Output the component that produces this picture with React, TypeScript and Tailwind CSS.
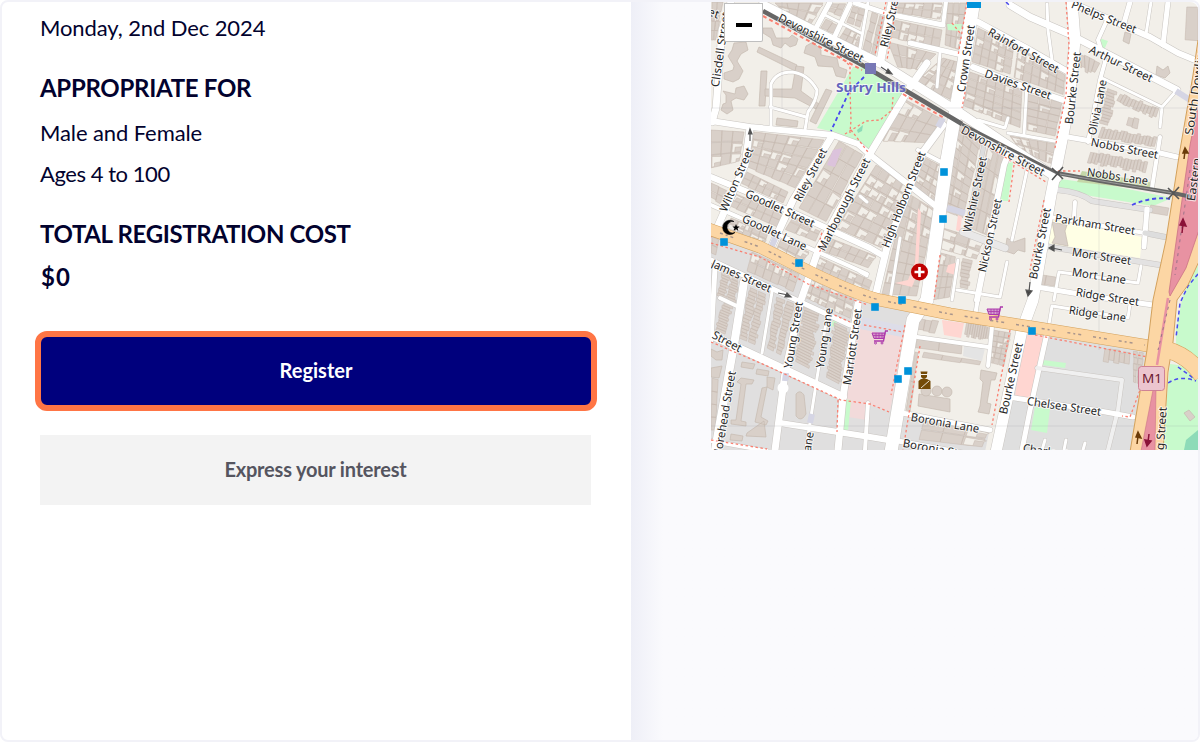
type Road = { d: string; w: number; c?: string };
type BlockProps = { q: number[]; c: number; r: number };
type LabelProps = { t: string; p: [number, number, number, number]; s?: number };

// Street network, drawn as a casing and a fill
const roads: Road[] = [
  { d: "M711 121 L750 127 L833 135 L858 144 L873 157 L937 207", w: 6 },
  { d: "M731 2 L722 30 L716 108 L712 122", w: 7 },
  { d: "M771 127 V84 Q776 72 792 72 Q808 74 817 90 Q817 100 808 112 L805 130", w: 3 },
  { d: "M770 107 L806 117", w: 3 },
  { d: "M892 2 L880 63", w: 8 },
  { d: "M830 2 L815 30", w: 5 },
  { d: "M850 4 L834 38", w: 5 },
  { d: "M823 14 L861 33", w: 3 },
  { d: "M868 2 L860 48", w: 3 },
  { d: "M855 3 L888 14 L943 25", w: 5 },
  { d: "M946 2 L943 25", w: 4 },
  { d: "M910 43 L962 55", w: 5 },
  { d: "M940 53 L937 87", w: 3 },
  { d: "M927 63 L910 87 L868 157 L819 248 L801 300 L785 373 L775 450", w: 7 },
  { d: "M978 22 L1030 50 L1070 73", w: 6 },
  { d: "M973 67 L1030 89 L1066 101", w: 6 },
  { d: "M943 125 L923 152 L887 247 L874 302", w: 7 },
  { d: "M1010 5 L1030 17 L1067 33 L1177 90", w: 7 },
  { d: "M1077 5 L1150 37 L1178 53 L1195 60", w: 6 },
  { d: "M1047 4 L1048 30 L1053 67", w: 3 },
  { d: "M1130 2 L1124 23", w: 5 },
  { d: "M1151 2 L1146 34", w: 3 },
  { d: "M1168 2 L1163 45", w: 5 },
  { d: "M1107 20 L1098 40 L1105 62 L1100 80 L1088 142", w: 4 },
  { d: "M1102 78 L1162 107 L1177 90 M1162 107 L1160 127", w: 3 },
  { d: "M1068 137 L1160 153 L1177 157", w: 5 },
  { d: "M1160 137 L1152 188", w: 4 },
  { d: "M1027 84 L1024 135 M978 120 L1005 128 L1008 118 M1008 133 L1060 142", w: 3 },
  { d: "M750 128 L745 165 L717 228", w: 7 },
  { d: "M832 136 L793 200 L771 248", w: 7 },
  { d: "M711 177 L750 193 L870 248 L882 255", w: 6 },
  { d: "M711 205 L807 247 L867 274", w: 4 },
  { d: "M711 260 L790 297 L850 325", w: 5 },
  { d: "M744 282 L734 345 L715 450", w: 8 },
  { d: "M772 292 L762 353", w: 3 },
  { d: "M715 268 L711 340", w: 5 },
  { d: "M720 298 L741 308", w: 4 },
  { d: "M711 335 L843 397", w: 8 },
  { d: "M858 304 L843 397 L838 450", w: 7 },
  { d: "M828 310 L817 378 L810 423 L806 450", w: 3 },
  { d: "M780 423 L870 437 L894 441", w: 6 },
  { d: "M868 403 L865 450", w: 4 },
  { d: "M711 441 L767 451", w: 4 },
  { d: "M902 413 L990 430", w: 5 },
  { d: "M898 441 L990 458", w: 5 },
  { d: "M917 337 L988 347 M992 327 L988 366", w: 4 },
  { d: "M978 298 L975 316", w: 4 },
  { d: "M1007 262 L1000 297 L957 290 M958 260 L952 300", w: 3 },
  { d: "M1010 150 L1004 165 L977 300", w: 6 },
  { d: "M985 140 L967 228", w: 4, c: "#ddd" },
  { d: "M1027 170 L1012 240", w: 3 },
  { d: "M963 232 L1005 248", w: 7, c: "#e9e8e8" },
  { d: "M900 238 L890 300", w: 3 },
  { d: "M860 196 L867 202 M860 272 L867 276", w: 3 },
  { d: "M918 150 L943 163", w: 4 },
  { d: "M1058 190 Q1080 192 1092 201 L1150 210", w: 5, c: "#e3e2e2" },
  { d: "M1050 217 L1145 233 M1075 202 L1074 217", w: 4 },
  { d: "M1147 209 L1144 247", w: 5 },
  { d: "M1145 233 L1165 237", w: 5, c: "#ddd" },
  { d: "M1044 246 L1160 265", w: 5, c: "#e3e2e2" },
  { d: "M1054 300 L1059 272 L1138 283 L1141 266", w: 3 },
  { d: "M1037 287 L1097 297 L1153 305", w: 5 },
  { d: "M1049 324 L1052 306 L1128 318 L1130 304", w: 3 },
  { d: "M1047 333 L1030 410 L1022 450", w: 5 },
  { d: "M1037 368 L1122 380 L1118 410 L1108 450", w: 4, c: "#f0f0f0" },
  { d: "M1008 397 L1100 411 L1133 417", w: 5 },
  { d: "M1045 440 L1042 450 M1066 440 L1064 450 M1085 443 L1083 450", w: 3 },
  { d: "M763 5 L865 56 L882 64 L960 113 L1000 140 L1057 178", w: 9 },
  { d: "M1072 0 L1075 40 L1069 105 L1060 150 L1051 195 L1033 300 L1022 330 L996 452", w: 11 },
  { d: "M974 0 L961 80 L947 160 L927 300 L913 320 L891 452", w: 13 },
];

// Quads of building plots: four corners, then columns and rows
const blocks: BlockProps[] = [
  { q: [711, 2, 724, 2, 716, 40, 711, 40], c: 2, r: 4 },
  { q: [775, 3, 823, 3, 811, 24, 782, 10], c: 4, r: 2 },
  { q: [826, 19, 840, 25, 833, 34, 820, 29], c: 2, r: 1 },
  { q: [833, 3, 846, 3, 840, 17, 827, 12], c: 2, r: 2 },
  { q: [846, 28, 862, 35, 858, 47, 839, 39], c: 3, r: 2 },
  { q: [852, 6, 866, 10, 862, 28, 846, 22], c: 2, r: 3 },
  { q: [872, 12, 886, 18, 877, 57, 863, 49], c: 2, r: 4 },
  { q: [896, 3, 942, 3, 940, 20, 893, 12], c: 5, r: 2 },
  { q: [894, 20, 942, 30, 939, 48, 890, 38], c: 6, r: 2 },
  { q: [948, 3, 966, 3, 960, 50, 945, 45], c: 3, r: 4 },
  { q: [888, 42, 936, 54, 920, 70, 898, 68], c: 5, r: 2 },
  { q: [943, 58, 958, 62, 950, 100, 915, 82], c: 4, r: 4 },
  { q: [904, 99, 942, 119, 925, 143, 882, 142], c: 4, r: 3 },
  { q: [978, 28, 1014, 45, 1010, 75, 972, 62], c: 5, r: 4 },
  { q: [1018, 48, 1065, 75, 1063, 95, 1014, 78], c: 6, r: 3 },
  { q: [970, 72, 1022, 90, 1020, 128, 963, 106], c: 6, r: 5 },
  { q: [1028, 94, 1063, 103, 1055, 136, 1027, 130], c: 3, r: 5 },
  { q: [1010, 136, 1056, 144, 1052, 165, 1020, 150], c: 5, r: 2 },
  { q: [711, 130, 744, 132, 739, 162, 711, 168], c: 3, r: 3 },
  { q: [754, 132, 824, 140, 795, 188, 748, 168], c: 6, r: 5 },
  { q: [711, 183, 727, 190, 720, 204, 711, 199], c: 2, r: 2 },
  { q: [747, 172, 788, 192, 783, 203, 741, 184], c: 6, r: 2 },
  { q: [736, 194, 782, 213, 777, 227, 728, 206], c: 6, r: 2 },
  { q: [731, 218, 768, 233, 764, 245, 727, 228], c: 5, r: 2 },
  { q: [839, 141, 863, 155, 827, 222, 799, 208], c: 3, r: 5 },
  { q: [795, 214, 822, 227, 815, 242, 785, 230], c: 3, r: 2 },
  { q: [781, 239, 809, 252, 800, 266, 775, 253], c: 3, r: 2 },
  { q: [876, 165, 910, 186, 882, 248, 836, 228], c: 5, r: 7 },
  { q: [827, 237, 876, 256, 868, 268, 821, 251], c: 6, r: 2 },
  { q: [819, 257, 872, 281, 867, 295, 813, 271], c: 7, r: 2 },
  { q: [926, 158, 943, 167, 935, 203, 912, 186], c: 3, r: 5 },
  { q: [906, 192, 935, 210, 917, 296, 882, 294], c: 4, r: 9 },
  { q: [958, 118, 981, 142, 963, 218, 942, 210], c: 3, r: 10 },
  { q: [988, 145, 1004, 158, 989, 236, 970, 228], c: 3, r: 4 },
  { q: [943, 228, 983, 240, 976, 260, 940, 249], c: 3, r: 2 },
  { q: [941, 253, 956, 257, 950, 297, 932, 300], c: 3, r: 4 },
  { q: [961, 258, 974, 261, 969, 289, 959, 287], c: 1, r: 8 },
  { q: [1073, 48, 1101, 61, 1093, 76, 1080, 70], c: 5, r: 1 },
  { q: [1121, 93, 1159, 108, 1155, 120, 1116, 102], c: 12, r: 1 },
  { q: [1106, 88, 1117, 92, 1110, 126, 1099, 123], c: 1, r: 11 },
  { q: [1102, 127, 1157, 137, 1154, 148, 1098, 138], c: 17, r: 1 },
  { q: [1091, 151, 1148, 161, 1145, 174, 1087, 164], c: 18, r: 1 },
  { q: [1129, 116, 1139, 119, 1137, 130, 1126, 127], c: 2, r: 1 },
  { q: [1187, 3, 1198, 3, 1198, 43, 1185, 42], c: 1, r: 1 },
  { q: [1151, 204, 1169, 207, 1167, 217, 1149, 214], c: 1, r: 1 },
  { q: [1037, 273, 1056, 276, 1054, 287, 1035, 284], c: 2, r: 1 },
  { q: [711, 236, 719, 240, 716, 255, 711, 253], c: 1, r: 2 },
  { q: [752, 252, 799, 274, 793, 292, 747, 271], c: 6, r: 2 },
  { q: [807, 277, 854, 298, 850, 319, 801, 296], c: 6, r: 3 },
  { q: [722, 272, 740, 280, 736, 303, 716, 295], c: 2, r: 9 },
  { q: [722, 302, 734, 307, 727, 335, 715, 330], c: 1, r: 11 },
  { q: [749, 287, 767, 295, 756, 345, 739, 338], c: 2, r: 15 },
  { q: [776, 297, 795, 304, 783, 356, 767, 348], c: 2, r: 15 },
  { q: [803, 307, 822, 314, 812, 370, 793, 360], c: 1, r: 20 },
  { q: [833, 322, 852, 331, 841, 385, 826, 377], c: 1, r: 20 },
  { q: [711, 378, 720, 380, 716, 430, 711, 430], c: 1, r: 4 },
  { q: [919, 317, 939, 320, 934, 335, 917, 333], c: 3, r: 1 },
  { q: [967, 320, 990, 326, 987, 343, 964, 338], c: 10, r: 1 },
  { q: [917, 339, 962, 345, 961, 357, 915, 351], c: 2, r: 1 },
  { q: [924, 352, 981, 361, 979, 366, 922, 358], c: 3, r: 1 },
  { q: [993, 330, 1011, 333, 1004, 366, 988, 362], c: 3, r: 6 },
  { q: [915, 352, 919, 353, 910, 412, 906, 410], c: 1, r: 2 },
  { q: [924, 420, 988, 431, 982, 447, 919, 440], c: 3, r: 2 },
  { q: [1105, 348, 1130, 352, 1129, 367, 1103, 362], c: 5, r: 1 },
  { q: [1133, 351, 1144, 353, 1140, 384, 1133, 382], c: 2, r: 5 },
];

const labels: LabelProps[] = [
  { t: "Devonshire Street", p: [779, 17, 863, 59] },
  { t: "Clisdell Street", p: [715, 87, 726, 12] },
  { t: "Riley Street", p: [884, 47, 897, -10] },
  { t: "Crown Street", p: [961, 92, 971, 25] },
  { t: "Rainford Street", p: [989, 31, 1058, 70] },
  { t: "Davies Street", p: [985, 73, 1051, 96] },
  { t: "Phelps Street", p: [1072, 4, 1136, 30] },
  { t: "Arthur Street", p: [1090, 49, 1152, 79] },
  { t: "Bourke Street", p: [1069, 124, 1077, 52] },
  { t: "Olivia Lane", p: [1092, 135, 1103, 80] },
  { t: "South Dowling", p: [1189, 135, 1202, 44] },
  { t: "Nobbs Street", p: [1091, 142, 1158, 155] },
  { t: "Nobbs Lane", p: [1087, 172, 1148, 181] },
  { t: "Devonshire Street", p: [962, 129, 1044, 173] },
  { t: "Wilton Street", p: [723, 211, 750, 148] },
  { t: "Riley Street", p: [797, 201, 824, 149] },
  { t: "Marlborough Street", p: [821, 250, 867, 159] },
  { t: "Goodlet Street", p: [746, 193, 814, 224] },
  { t: "Goodlet Lane", p: [743, 218, 806, 247] },
  { t: "James Street", p: [712, 263, 771, 289] },
  { t: "High Holborn Street", p: [885, 247, 922, 152] },
  { t: "Wilshire Street", p: [967, 232, 983, 157] },
  { t: "Nickson Street", p: [982, 272, 998, 199] },
  { t: "Bourke Street", p: [1033, 279, 1047, 208] },
  { t: "Parkham Street", p: [1055, 218, 1135, 231] },
  { t: "Mort Street", p: [1072, 252, 1131, 261] },
  { t: "Mort Lane", p: [1072, 272, 1126, 280] },
  { t: "Ridge Street", p: [1076, 292, 1139, 302] },
  { t: "Ridge Lane", p: [1069, 310, 1126, 318] },
  { t: "Street", p: [713, 334, 741, 349] },
  { t: "Young Street", p: [788, 368, 799, 302] },
  { t: "Young Lane", p: [820, 368, 829, 308] },
  { t: "Marriott Street", p: [847, 385, 858, 309] },
  { t: "Morehead Street", p: [717, 459, 732, 371] },
  { t: "Young Lane", p: [800, 492, 810, 432] },
  { t: "Boronia Lane", p: [911, 417, 979, 429] },
  { t: "Boronia Street", p: [903, 443, 979, 457] },
  { t: "Bourke Street", p: [1003, 414, 1019, 343] },
  { t: "Chelsea Street", p: [1027, 401, 1101, 412] },
  { t: "Charles Lane", p: [1023, 448, 1089, 458] },
  { t: "Dowling Street", p: [1157, 488, 1163, 407] },
  { t: "Eastern", p: [1191, 201, 1197, 158] },
  { t: "Short Street", p: [655, -8, 719, 15] },
];

const noise = (n: number) => {
  const v = Math.sin(n * 12.9898) * 43758.5453;
  return v - Math.floor(v);
};

const Block = ({ q, c, r }: BlockProps) => {
  const at = (u: number, v: number) => {
    const x = (1 - v) * ((1 - u) * q[0] + u * q[2]) + v * ((1 - u) * q[6] + u * q[4]);
    const y = (1 - v) * ((1 - u) * q[1] + u * q[3]) + v * ((1 - u) * q[7] + u * q[5]);
    return `${x.toFixed(1)} ${y.toFixed(1)}`;
  };
  const dense = c > 2 && r > 1;
  const cells: string[] = [];
  const yards: string[] = [];
  for (let j = 0; j < r; j++) {
    for (let i = 0; i < c; i++) {
      const seed = q[0] * 3 + q[1] + i * 7 + j * 31;
      // terraces get ragged ends, denser plots keep shared walls
      const a = noise(seed + 1) * (dense ? 0 : 0.18);
      const b = noise(seed + 2) * (dense ? 0.12 : 0.28);
      const u0 = (i + (r > c ? a : 0)) / c;
      const u1 = (i + 1 - (r > c ? b : 0)) / c;
      const v0 = (j + (r > c ? 0 : a)) / r;
      const v1 = (j + 1 - (r > c ? 0 : b)) / r;
      cells.push(`M${at(u0, v0)} L${at(u1, v0)} L${at(u1, v1)} L${at(u0, v1)} Z`);
      if (dense && noise(seed + 3) < 0.32) {
        const k = 0.3 + noise(seed + 4) * 0.5;
        const m = 0.3 + noise(seed + 5) * 0.4;
        yards.push(
          `M${at((i + 0.1) / c, (j + 0.1) / r)} L${at((i + 1.1) / c, (j + 0.2) / r)} L${at((i + 1) / c, (j + m) / r)} L${at((i + k) / c, (j + m) / r)} L${at((i + k) / c, (j + 0.95) / r)} L${at((i + 0.1) / c, (j + 0.95) / r)} Z`
        );
      }
    }
  }
  return (
    <g stroke="#c6bab0" strokeWidth={0.55}>
      <path d={cells.join(" ")} fill="#d9d0c9" />
      <path d={yards.join(" ")} fill="#f2efe9" />
    </g>
  );
};

const Label = ({ t, p, s = 11.4 }: LabelProps) => {
  const [x1, y1, x2, y2] = p;
  const angle = (Math.atan2(y2 - y1, x2 - x1) * 180) / Math.PI;
  return (
    <text
      transform={`translate(${x1} ${y1}) rotate(${angle})`}
      y={s * 0.34}
      fontSize={s}
      textLength={Math.hypot(x2 - x1, y2 - y1)}
      lengthAdjust="spacingAndGlyphs"
    >
      {t}
    </text>
  );
};

const Cart = ({ x, y }: { x: number; y: number }) => (
  <g transform={`translate(${x} ${y})`} fill="none" stroke="#ac39ac">
    <path d="M16 1 H13.5 L11.5 11 H2" strokeWidth={1.3} />
    <path d="M0 3 H13 L12 8.5 H2 Z" fill="#ac39ac" fillOpacity={0.45} strokeWidth={1} />
    <path d="M4 3 V8 M7 3 V8 M10 3 V8 M1 5.5 H12" strokeWidth={0.8} />
    <circle cx={3.5} cy={13} r={1} />
    <circle cx={10} cy={13} r={1} />
  </g>
);

const stops = [
  [724, 242], [799, 263], [944, 172], [943, 219], [902, 300],
  [875, 307], [908, 371], [898, 379], [1032, 331],
];

const StreetMap = () => (
  <svg viewBox="711 2 487 448" className="block h-[448px] w-[487px]">
    <rect x={711} y={2} width={487} height={448} fill="#f2efe9" />

    {/* Land use */}
    <path d="M711 235 L760 250 L810 277 L870 301 L913 313 L915 335 L903 413 L990 428 L985 452 H711 Z" fill="#e0dfdf" />
    <path d="M1022 330 L1150 350 L1130 452 H996 Z" fill="#dfdfdf" />
    <path d="M711 130 L742 132 L738 150 L711 165 Z" fill="#e0dfdf" />
    <path d="M853 67 L817 128 L838 133 L870 150 L904 94 L868 68 Z" fill="#c8facc" />
    <path d="M1060 179 L1113 186 L1172 198 L1153 206 L1097 197 L1057 190 Z" fill="#c8facc" />
    <path d="M1082 171 L1150 182 V190 L1077 182 Z" fill="#c5d8a8" />
    <path d="M1005 164 L1013 162 L1008 201 L1000 201 Z" fill="#c8facc" />
    <path d="M1050 219 L1142 237 L1140 258 L1047 243 Z" fill="#ffffe5" />
    <path d="M1198 265 L1183 295 L1176 330 V345 L1198 360 Z M1170 364 Q1190 365 1198 380 V450 H1162 Z" fill="#c8facc" />
    <path d="M1198 430 L1186 440 L1184 450 H1198 Z" fill="#8ddbb8" />
    <path d="M857 318 L905 332 L890 411 L868 405 L867 420 L848 417 L845 395 Z" fill="#f2dada" />
    <path d="M1025 333 L1044 336 L1030 400 L1015 396 Z" fill="#ffd6d1" />
    <path d="M842 399 L851 400 L848 431 L839 430 Z M1043 360 L1066 363 L1065 368 L1042 365 Z M1035 407 L1050 409 L1047 433 L1031 430 Z" fill="#c8facc" />
    <path d="M834 318 L837 318 L836 327 L831 326 Z" fill="#c8facc" />
    <path d="M942 320 L964 323 L961 338 L944 335 Z" fill="#ffd6d1" />
    <path d="M919 345 L1003 358 L990 425 L909 413 Z" fill="#f2efe9" />
    <path d="M862 317 L904 326 L902 337 L860 329 Z" fill="#dddde8" />

    {blocks.map((b, i) => (
      <Block key={i} {...b} />
    ))}

    <path d="M947 24 L962 24 L960 31 L948 30 Z M1099 38 L1108 41 L1104 50 L1096 46 Z" fill="#c8facc" />
    <path d="M918 208 L921 212 L918 272 L912 287 L895 283 L908 280 L915 262 Z M948 265 L959 262 L955 275 L946 272 Z M958 215 L962 217 L960 232 L956 230 Z" fill="#ffd6d1" />
    <path d="M857 130 L863 125 L862 131 L858 133 Z" fill="#8ddbb8" />

    {/* Free standing buildings */}
    <g fill="#d9d0c9" stroke="#c6bab0" strokeWidth={0.7}>
      <path d="M763 28 L772 28 L776 38 L789 38 L792 35 L798 39 L796 45 L790 47 L785 43 L781 48 L773 45 L771 38 L763 33 Z" />
      <path d="M734 43 L746 42 L748 50 L741 54 L737 61 L743 71 L739 79 L733 82 L724 79 L724 73 L733 70 L734 66 L728 56 L732 50 Z" />
      <path d="M736 88 L744 86 L748 94 L744 100 L736 98 L731 101 L733 110 L727 114 L721 110 L723 104 L726 103 L726 95 L723 91 L735 94 Z" />
      <path d="M806 46 L813 42 L821 50 L821 55 L837 58 L839 67 L847 70 L845 78 L836 76 L833 67 L818 66 L815 57 L804 53 Z" />
      <path d="M759 47 L797 65 L795 71 L757 52 Z" />
      <path d="M761 71 L767 71 L765 106 L759 106 Z" />
      <path d="M765 89 L792 89 L796 66 L804 67 L801 91 L819 104 L816 109 L795 98 L765 96 Z" />
      <path d="M826 89 L832 91 L816 124 L810 121 Z M777 118 L798 121 L797 127 L776 125 Z" />
      <path d="M1125 32 L1131 34 L1129 44 L1123 41 Z M1157 66 L1163 70 L1168 66 L1170 73 L1165 78 L1156 75 Z" />
      <path d="M1052 222 L1067 225 L1065 231 L1068 246 L1052 243 L1055 237 Z" />
      <path d="M1007 238 L1014 242 L1025 238 V252 L1018 250 L1014 254 L1005 251 Z" />
      <path d="M741 378 L754 380 L752 384 L746 384 L741 421 L746 422 V426 L731 424 V420 L736 420 L741 384 L737 382 Z" />
      <path d="M762 388 L767 387 L761 417 L768 421 L766 425 L755 422 Z M767 377 L775 378 L773 390 L767 387 Z M742 362 L755 364 L753 369 L741 367 Z M757 369 L769 371 L768 376 L756 374 Z M764 421 L766 437 L746 436 L747 433 Z M731 434 L743 436 L742 441 L730 440 Z" />
      <path d="M796 394 Q800 389 804 395 L806 414 Q801 423 796 416 Z" />
      <path d="M711 349 L717 352 L723 350 L722 360 L716 360 L711 356 Z M711 368 L722 366 L719 378 L711 377 Z" />
      <path d="M981 370 L997 373 L995 380 L991 380 L987 403 L991 404 L989 414 L978 412 L980 406 L983 382 L980 379 Z" />
      <path d="M919 394 L950 399 L950 412 L918 406 Z" />
      <circle cx={926} cy={391} r={5} />
      <circle cx={937} cy={391} r={5} />
      <circle cx={947} cy={392} r={5} />
      <path d="M1184 413 L1189 410 L1195 417 L1190 421 Z" />
    </g>
    <path d="M833 150 L842 148 L835 167 L827 165 Z" fill="#dcc3dc" />
    <path d="M964 345 L985 348 L982 361 L963 356 Z" fill="#e4e4e4" />

    {/* Streets */}
    <g fill="none" strokeLinejoin="round" strokeLinecap="round">
      {roads.map((r, i) => (
        <path key={i} d={r.d} stroke="#c9c5c1" strokeWidth={r.w + 1} />
      ))}
      {roads.map((r, i) => (
        <path key={i} d={r.d} stroke={r.c ?? "#fff"} strokeWidth={r.w} />
      ))}
      <circle cx={783} cy={388} r={5.5} fill="#fff" stroke="none" />
      <path d="M777 234 L771 248 M943 118 L938 127 M947 208 L965 213 M786 373 L785 381 M812 414 L810 423 M1176 91 L1190 100" stroke="#d5d5e4" strokeWidth={6} strokeLinecap="butt" />
    </g>

    {/* Footpaths and cycleways */}
    <g fill="none" stroke="#fa8072" strokeWidth={1.3} strokeDasharray="2.5 2.5">
      <path d="M763 16 L862 70 M903 94 L944 118" strokeWidth={2} strokeDasharray="4 3" />
      <path d="M962 131 L1046 182" />
      <path d="M840 56 L850 66 L850 90 L851 120 L850 133 M845 134 L858 126 L866 121 L880 120 L892 110 L893 97 M851 130 L868 152" />
      <path d="M886 2 L875 55 M897 2 L887 60 M967 2 L958 56 M967 82 L962 108 M1066 2 L1069 45 L1066 95 L1055 148" />
      <path d="M711 243 L760 257 L808 284 L868 305 M1044 200 L1030 270 M1014 165 L1009 202 M1058 171 L1080 171 M952 23 L960 33" />
      <path d="M711 342 L765 365 L841 400 L870 404 L889 412 M838 400 L837 432 M711 440 L767 449 M864 325 L903 332" />
      <path d="M905 325 L891 395 M940 255 L934 300 M1010 330 L992 425 M1035 335 L1148 357 L1140 390 L1130 417 L1122 416" />
      <path d="M945 314 L1024 326 M920 346 L903 450 M820 240 L822 232 M823 245 L819 253" />
      <path d="M711 225 V240 M830 313 L850 322" />
    </g>
    <g fill="none" stroke="#4a4aee" strokeWidth={1.8} strokeDasharray="4 3">
      <path d="M864 77 L849 92 L831 131 M1132 205 Q1153 196 1170 199 M1184 200 L1198 203" />
      <path d="M1198 274 L1188 286 L1180 303 L1176 338 M1168 383 Q1180 375 1196 381 M1178 367 L1196 380 M1006 2 L1010 6" strokeWidth={1.5} />
    </g>
    <g stroke="#8e8e98" strokeWidth={0.4} opacity={0.45}>
      <path d="M711 108 H1198 M782 2 V108 M1099 150 V350 M711 426 H1198" />
    </g>

    {/* Arterial roads */}
    <g fill="none" strokeLinejoin="round">
      <path d="M706 228 L760 247 L810 272 Q855 294 880 300 L950 314 L1032 327 L1155 347" stroke="#d3a15c" strokeWidth={12.5} />
      <path d="M706 228 L760 247 L810 272 Q855 294 880 300 L950 314 L1032 327 L1155 347" stroke="#fcd6a4" strokeWidth={11.5} />
      <path d="M1165 349 Q1190 356 1202 376" stroke="#d3a15c" strokeWidth={17} />
      <path d="M1198 40 L1193 75 L1180 150 L1166 240 L1153 300 L1147 350 L1130 452 H1163 L1168 372 L1173 342 L1177 300 L1188 285 L1202 255 V40 Z" fill="#fcd6a4" stroke="#d3a15c" />
      <path d="M1165 349 Q1190 356 1202 376" stroke="#fcd6a4" strokeWidth={16} />
      <path d="M1199 100 L1190 145 L1182 200 L1169 292 L1170 296 L1186 268 L1199 230 Z" fill="#e892a2" stroke="#c56a80" strokeWidth={0.7} />
      <path d="M1168 298 L1157 365" stroke="#e892a2" strokeWidth={2.5} />
      <path d="M1153 390 L1141 451 H1155 L1156 390 Z" fill="#e892a2" stroke="#c56a80" strokeWidth={0.5} />
      <path d="M720 233 L760 247 L810 272 Q855 294 880 300 L950 314 L1032 327 L1145 345" stroke="#a9958c" strokeWidth={1.5} strokeDasharray="3 3 2 3 3 12" />
      <path d="M1170 300 L1158 350 M1190 170 L1175 275" stroke="#9a7488" strokeWidth={1} strokeDasharray="3 4" />
    </g>

    {/* Railway */}
    <g fill="none" stroke="#666">
      <path d="M763 11 L864 66 L903 89 L962 124" strokeWidth={4.5} />
      <path d="M962 124 L1057 173" strokeWidth={3} />
      <path d="M1057 173 L1100 181 L1173 193 L1192 197" strokeWidth={4} />
      <path d="M1060 174 L1173 193" stroke="#999" strokeWidth={1} />
      <path d="M1052 168 L1063 179 M1063 167 L1052 180 M1168 188 L1179 199 M1179 187 L1168 199" stroke="#555" strokeWidth={1.6} />
    </g>
    <rect x={865} y={63} width={11} height={11} fill="#7878b5" />

    {/* One way arrows */}
    <g stroke="#555" strokeWidth={1.2} fill="#444">
      <path d="M750 141 V132 M748.5 134 L750 129 L752 134 Z" />
      <path d="M881 67 L887 71 M886 73 L892 74 L888 69 Z" />
      <path d="M778 293 L788 295 M785 297 L791 297 L787 293 Z" />
      <path d="M1062 250 L1052 248 M1054 245 L1049 248 L1054 251 Z" />
      <path d="M1030 282 L1029 292 M1026 290 L1028 296 L1032 291 Z" />
    </g>
    <g stroke="#6b3b08" strokeWidth={1.5} fill="#6b3b08">
      <path d="M1184 159 L1185 151 M1183 153 L1185 148 L1188 153 Z M1137 444 L1138 436 M1136 437 L1138 432 L1141 438 Z" />
    </g>
    <g stroke="#8b1238" strokeWidth={1.5} fill="#8b1238">
      <path d="M1182 233 L1183 224 M1180 225 L1183 219 L1186 226 Z M1149 434 L1148 442 M1145 440 L1147 446 L1151 441 Z" />
    </g>

    {/* Street names */}
    <g
      className="font-['Noto_Sans']"
      fill="#262626"
      stroke="#fff"
      strokeOpacity={0.7}
      strokeWidth={2}
      strokeLinejoin="round"
      paintOrder="stroke"
    >
      {labels.map((l, i) => (
        <Label key={i} {...l} />
      ))}
    </g>
    <text
      x={836}
      y={92}
      textLength={70}
      lengthAdjust="spacingAndGlyphs"
      className="font-['Noto_Sans'] text-[13px] font-bold"
      fill="#6464bc"
      stroke="#fff"
      strokeOpacity={0.6}
      strokeWidth={2}
      paintOrder="stroke"
    >
      Surry Hills
    </text>

    {/* Points of interest */}
    {stops.map(([x, y]) => (
      <rect key={`${x}-${y}`} x={x - 3.8} y={y - 3.8} width={7.6} height={7.6} fill="#0092da" />
    ))}
    <rect x={967} y={2} width={14} height={6} fill="#0092da" />
    <circle cx={919.5} cy={272} r={8.5} fill="#bf0000" />
    <path d="M919.5 267 V277 M914.5 272 H924.5" stroke="#fff" strokeWidth={2.6} />
    <path d="M734 221.5 A7.2 7.2 0 1 0 735 232.5 A5.8 5.8 0 1 1 734 221.5 Z" fill="#000" stroke="#000" strokeWidth={0.6} />
    <path d="M736 224 L737 226.4 L739.6 226.6 L737.6 228.2 L738.2 230.8 L736 229.3 L733.7 230.8 L734.4 228.2 L732.4 226.6 L735 226.4 Z" fill="#000" />
    <Cart x={987} y={306} />
    <Cart x={872} y={330} />
    <g fill="#734a08">
      <path d="M920.5 371.5 H927.5 L927 374 H921 Z M921 375 H927 V377 Q924 381 921 377 Z" />
      <path d="M918.5 381 L921 379 H927 L930.5 381 V389 H918.5 Z" />
      <path d="M921 388 L929 381" stroke="#f2efe9" strokeWidth={0.9} />
    </g>
    <rect x={1138.5} y={366.5} width={26} height={24} rx={3} fill="#ecc5cf" stroke="#cf8295" />
    <text x={1142} y={383} textLength={20} lengthAdjust="spacingAndGlyphs" className="font-['Noto_Sans'] text-[12.5px]" fill="#6b1730">
      M1
    </text>
  </svg>
);

const App = () => {
  return (
    <div className="flex h-[742px] w-[1200px] overflow-hidden rounded-lg border-2 border-[#f2f2f8] bg-white font-['Lato',sans-serif] text-[#02022e]">
      {/* Details column */}
      <div className="w-[629px] shrink-0 pt-[11px] pr-10 pl-[38px]">
        <p className="text-[22px] leading-[30px] tracking-[-0.1px]">Monday, 2nd Dec 2024</p>
        <h2 className="mt-[30px] text-[24px] leading-[30px] font-bold tracking-[-0.3px] whitespace-nowrap">
          APPROPRIATE FOR
        </h2>
        <p className="mt-[15px] text-[22px] leading-[30px] tracking-[-0.1px]">Male and Female</p>
        <p className="mt-[11px] text-[22px] leading-[30px] tracking-[-0.45px]">Ages 4 to 100</p>
        <h2 className="mt-[30px] text-[24px] leading-[30px] font-bold tracking-[-0.35px] whitespace-nowrap">
          TOTAL REGISTRATION COST
        </h2>
        <p className="mt-[13px] pl-px text-[24px] leading-[30px] font-bold tracking-[1px]">$0</p>

        <button className="mt-[39px] -ml-[5px] flex h-20 w-[562px] items-center justify-center rounded-xl border-6 border-[#ff7545] bg-[#00007d] pb-0.5 text-[20px] font-bold text-white">
          Register
        </button>
        <button className="mt-6 flex h-[70px] w-[551px] items-center justify-center bg-[#f3f3f3] pb-0.5 text-[20px] font-bold tracking-[-0.2px] text-[#55555f]">
          Express your interest
        </button>
      </div>

      {/* Map column */}
      <div className="flex-1 bg-[#fafafd] bg-linear-to-r from-[#eeeff7] to-[#fafafd] to-[32px] pl-20">
        <div className="relative h-[448px] w-[487px] overflow-hidden rounded-tr-lg">
          <StreetMap />
          <button
            aria-label="Zoom out"
            className="absolute top-[1px] left-[13px] flex h-[39px] w-[39px] items-center justify-center rounded-b-xs border border-black/25 bg-white"
          >
            <span className="mt-1 h-1 w-4 bg-black" />
          </button>
        </div>
      </div>
    </div>
  );
};

export default App;
